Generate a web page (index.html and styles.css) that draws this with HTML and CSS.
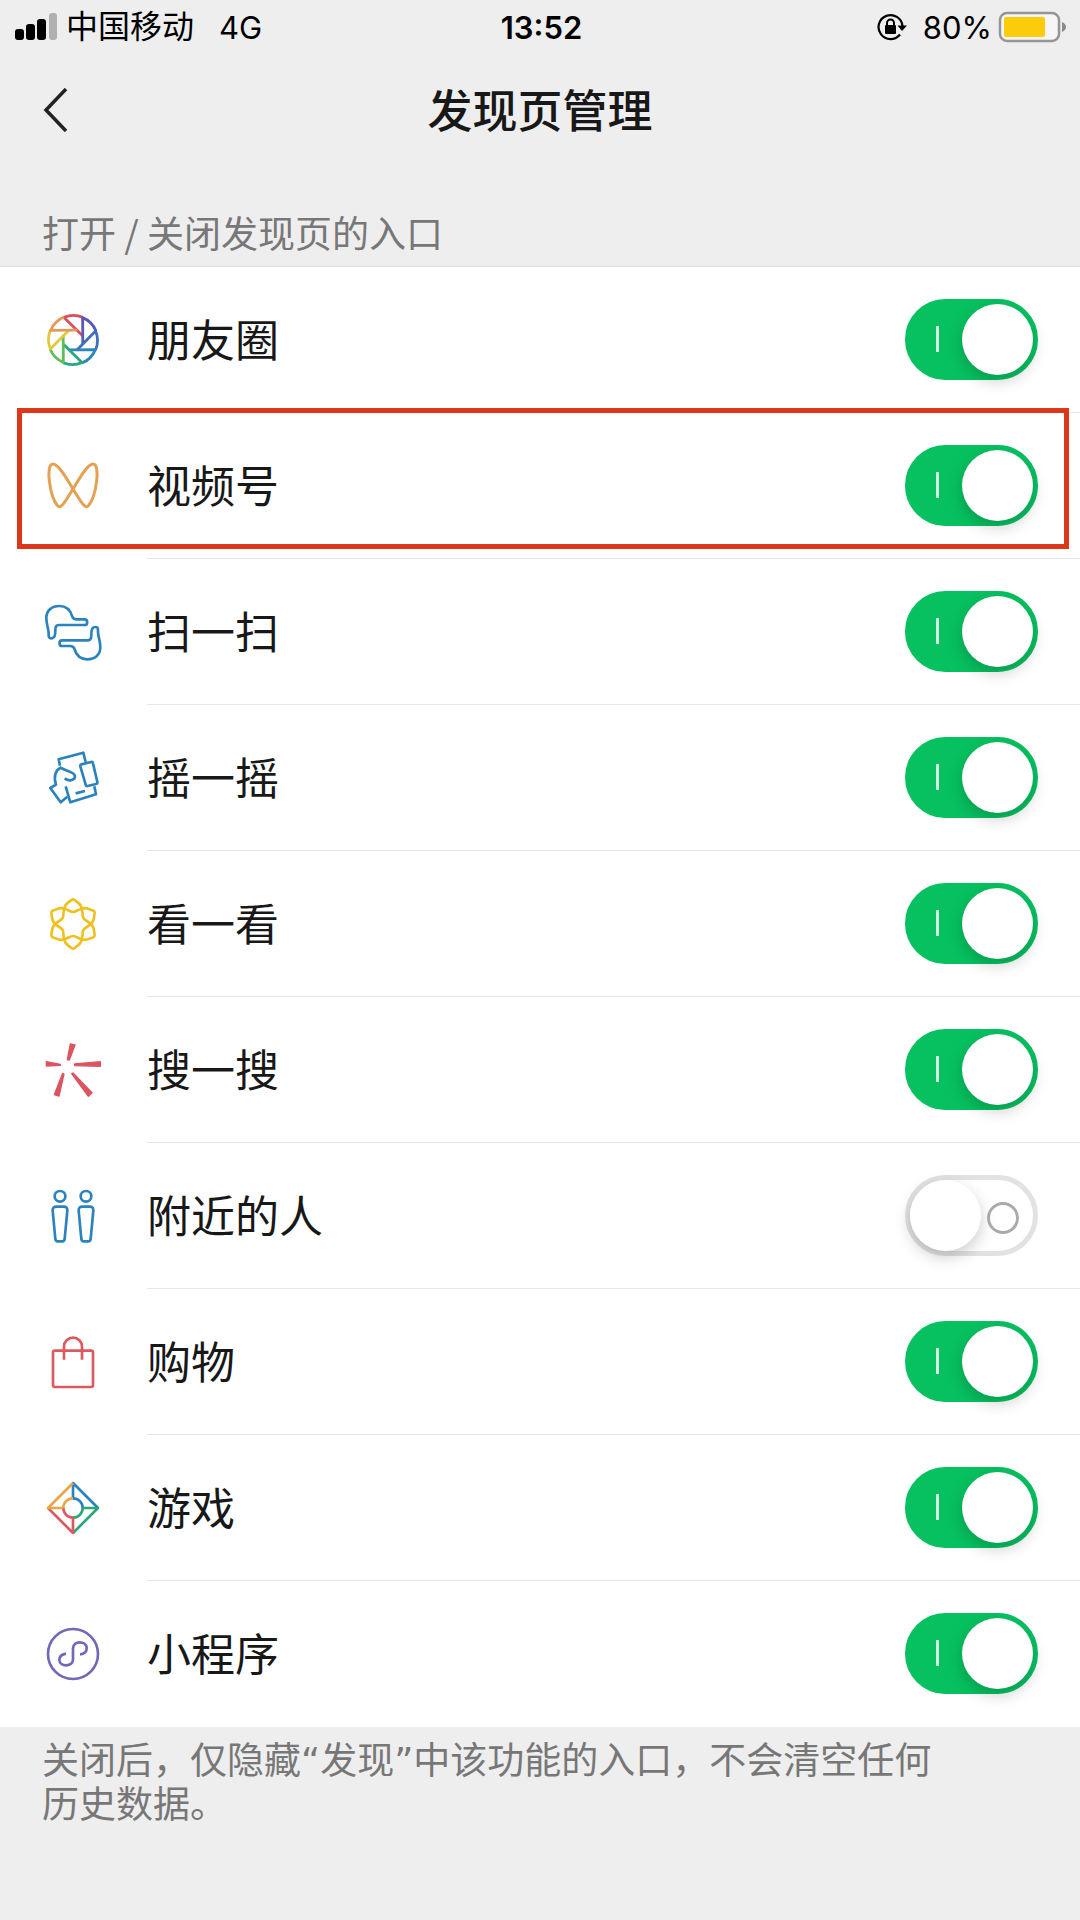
FILE: index.html
```html
<!DOCTYPE html>
<html lang="zh-CN">
<head>
    <meta charset="utf-8">
    <meta name="viewport" content="width=device-width, initial-scale=1">
    <title>发现页管理</title>
    <link rel="stylesheet" href="styles.css">
</head>
<body>
<div class="status-bar">
    <div class="status-left">
        <svg class="signal" viewBox="0 0 44 28" aria-hidden="true">
            <rect x="0" y="16" width="9" height="11" rx="3"/>
            <rect x="11" y="11" width="9" height="16" rx="3"/>
            <rect x="22" y="6" width="9" height="21" rx="3"/>
            <rect x="34" y="0" width="8" height="27" rx="3" fill="#b0b0b0"/>
        </svg>
        <span class="carrier">中国移动</span>
        <span class="network">4G</span>
    </div>
    <div class="status-time">13:52</div>
    <div class="status-right">
        <svg class="lock" viewBox="0 0 30 28" aria-hidden="true">
            <path d="M25.500 13A12 12 0 1 0 23 21.500" fill="none" stroke="#000" stroke-width="2.200"/>
            <path d="M20.500 12.500H30L25 18Z"/>
            <rect x="8" y="12" width="11" height="9" rx="1"/>
            <path d="M10 13V10a3.500 3.500 0 0 1 7 0V13" fill="none" stroke="#000" stroke-width="2"/>
        </svg>
        <span>80%</span>
        <svg class="battery" viewBox="0 0 70 32" aria-hidden="true">
            <rect x="2" y="2" width="59" height="28" rx="7" fill="#f7f5f5" stroke="#959595" stroke-width="2.500"/>
            <rect x="6" y="6" width="41" height="20" rx="2" fill="#fccc0a"/>
            <path d="M64 11Q68 13 68 16T64 21Z" fill="#8a8a8a"/>
        </svg>
    </div>
</div>

<header class="nav">
    <button class="back-btn" aria-label="返回">
        <svg viewBox="0 0 26 44"><path d="M24 1L4 22L24 43" fill="none" stroke="#222" stroke-width="3.500"/></svg>
    </button>
    <h1>发现页管理</h1>
</header>

<main>
    <h2 class="section-label">打开 / 关闭发现页的入口</h2>

    <ul class="list">
        <li class="row">
            <!-- Moments: eight shutter blades -->
            <svg class="icon" viewBox="-30 -30 60 60" stroke-width="2.800">
                <path stroke="#d9505c" d="M9.900 -4L-9 -22.600A24.400 24.400 0 0 1 9.900 -22.600"/>
                <path stroke="#5a58b4" transform="rotate(45)" d="M9.900 -4L-9 -22.600A24.400 24.400 0 0 1 9.900 -22.600"/>
                <path stroke="#3f6dc0" transform="rotate(90)" d="M9.900 -4L-9 -22.600A24.400 24.400 0 0 1 9.900 -22.600"/>
                <path stroke="#2b86ba" transform="rotate(135)" d="M9.900 -4L-9 -22.600A24.400 24.400 0 0 1 9.900 -22.600"/>
                <path stroke="#28a880" transform="rotate(180)" d="M9.900 -4L-9 -22.600A24.400 24.400 0 0 1 9.900 -22.600"/>
                <path stroke="#5cc05a" transform="rotate(225)" d="M9.900 -4L-9 -22.600A24.400 24.400 0 0 1 9.900 -22.600"/>
                <path stroke="#e2c83c" transform="rotate(270)" d="M9.900 -4L-9 -22.600A24.400 24.400 0 0 1 9.900 -22.600"/>
                <path stroke="#e39a58" transform="rotate(315)" d="M9.900 -4L-9 -22.600A24.400 24.400 0 0 1 9.900 -22.600"/>
            </svg>
            <div class="row-body">
                <label for="moments">朋友圈</label>
                <input type="checkbox" role="switch" class="switch" id="moments" checked>
            </div>
        </li>
        <li class="row highlight">
            <!-- Channels -->
            <svg class="icon" viewBox="-30 -30 60 60" stroke="#e3a252" stroke-width="3">
                <path d="M0 3C-5 -5 -14 -22 -20 -22C-28 -22 -23 10 -16 19C-13 24 -9 18 0 3C5 -5 14 -22 20 -22C28 -22 23 10 16 19C13 24 9 18 0 3Z"/>
            </svg>
            <div class="row-body">
                <label for="channels">视频号</label>
                <input type="checkbox" role="switch" class="switch" id="channels" checked>
            </div>
        </li>
        <li class="row">
            <!-- Scan: two framing hands -->
            <svg class="icon" viewBox="39 32 180 180" stroke="#2b82bd" stroke-width="8">
                <path d="M63 141C55 141 56 134 56 126C56 113 49 101 49 80C49 57 66 44 88 44C111 44 122 58 127 76C129 83 133 84 140 84H164C174 84 174 101 164 101H86C78 101 76 106 76 116C76 133 74 141 63 141Z"/>
                <path transform="rotate(180 130 124)" d="M63 141C55 141 56 134 56 126C56 113 49 101 49 80C49 57 66 44 88 44C111 44 122 58 127 76C129 83 133 84 140 84H164C174 84 174 101 164 101H86C78 101 76 106 76 116C76 133 74 141 63 141Z"/>
            </svg>
            <div class="row-body">
                <label for="scan">扫一扫</label>
                <input type="checkbox" role="switch" class="switch" id="scan" checked>
            </div>
        </li>
        <li class="row">
            <!-- Shake: hand with phone -->
            <svg class="icon" viewBox="39 470 180 180" stroke="#2b82bd" stroke-width="8">
                <path d="M90 523L86 504L160 484L167 512M193 585L198 609L121 633L107 585"/>
                <path d="M104 561C122 574 138 563 134 552C130 541 108 540 92 529C76 536 70 556 78 580L61 590L92 633L112 616"/>
                <path d="M154 519L183 512Q188 511 189 516L202 572Q203 577 198 578L173 584Q168 585 167 580L151 525Q150 520 154 519Z"/>
                <path d="M137 606L165 599"/>
            </svg>
            <div class="row-body">
                <label for="shake">摇一摇</label>
                <input type="checkbox" role="switch" class="switch" id="shake" checked>
            </div>
        </li>
        <li class="row">
            <!-- Top stories: six petals -->
            <svg class="icon" viewBox="-90 -90 180 180" stroke="#efc021" stroke-width="8">
                <path d="M-26 -45C-26 -60 -17 -61 -5 -72Q0 -76 5 -72C17 -61 26 -60 26 -45C16 -45 10 -36 0 -36C-10 -36 -16 -45 -26 -45Z"/>
                <path transform="rotate(60)" d="M-26 -45C-26 -60 -17 -61 -5 -72Q0 -76 5 -72C17 -61 26 -60 26 -45C16 -45 10 -36 0 -36C-10 -36 -16 -45 -26 -45Z"/>
                <path transform="rotate(120)" d="M-26 -45C-26 -60 -17 -61 -5 -72Q0 -76 5 -72C17 -61 26 -60 26 -45C16 -45 10 -36 0 -36C-10 -36 -16 -45 -26 -45Z"/>
                <path transform="rotate(180)" d="M-26 -45C-26 -60 -17 -61 -5 -72Q0 -76 5 -72C17 -61 26 -60 26 -45C16 -45 10 -36 0 -36C-10 -36 -16 -45 -26 -45Z"/>
                <path transform="rotate(240)" d="M-26 -45C-26 -60 -17 -61 -5 -72Q0 -76 5 -72C17 -61 26 -60 26 -45C16 -45 10 -36 0 -36C-10 -36 -16 -45 -26 -45Z"/>
                <path transform="rotate(300)" d="M-26 -45C-26 -60 -17 -61 -5 -72Q0 -76 5 -72C17 -61 26 -60 26 -45C16 -45 10 -36 0 -36C-10 -36 -16 -45 -26 -45Z"/>
            </svg>
            <div class="row-body">
                <label for="stories">看一看</label>
                <input type="checkbox" role="switch" class="switch" id="stories" checked>
            </div>
        </li>
        <li class="row">
            <!-- Search: five wedges -->
            <svg class="icon" viewBox="39 478 180 180" stroke="#db5560" stroke-width="4">
                <g fill="#db5560">
                    <path d="M121 490L135 493L118 538L112 537Z"/>
                    <path d="M134 550L211 543V557L134 555Z"/>
                    <path d="M49 543V556L91 554V551Z"/>
                    <path d="M98 578L102 580L87 646L73 642Z"/>
                    <path d="M125 579L129 577L186 636L175 647Z"/>
                </g>
            </svg>
            <div class="row-body">
                <label for="search">搜一搜</label>
                <input type="checkbox" role="switch" class="switch" id="search" checked>
            </div>
        </li>
        <li class="row">
            <!-- People nearby -->
            <svg class="icon" viewBox="39 46 180 180" stroke="#2b82bd" stroke-width="8">
                <circle cx="90" cy="77" r="16"/>
                <path d="M80 108H101Q113 108 112 120L104 205Q103 212 97 212H83Q77 212 76 205L68 120Q67 108 80 108Z"/>
                <circle cx="168" cy="77" r="16"/>
                <path d="M158 108H179Q191 108 190 120L182 205Q181 212 175 212H161Q155 212 154 205L146 120Q145 108 158 108Z"/>
            </svg>
            <div class="row-body">
                <label for="nearby">附近的人</label>
                <input type="checkbox" role="switch" class="switch" id="nearby">
            </div>
        </li>
        <li class="row">
            <!-- Shopping bag -->
            <svg class="icon" viewBox="39 484 180 180" stroke="#db5a60" stroke-width="8">
                <rect x="69" y="540" width="120" height="109" rx="6"/>
                <path d="M102 567V528A27 27 0 0 1 156 528V567"/>
            </svg>
            <div class="row-body">
                <label for="shopping">购物</label>
                <input type="checkbox" role="switch" class="switch" id="shopping" checked>
            </div>
        </li>
        <li class="row">
            <!-- Games: four-colour diamond -->
            <svg class="icon" viewBox="-90 -90 180 180" stroke-width="8">
                <path stroke="#2a80c0" d="M0 -30V-75L75 0M0 -29A29 29 0 0 1 29 0"/>
                <path stroke="#2aa775" transform="rotate(90)" d="M0 -30V-75L75 0M0 -29A29 29 0 0 1 29 0"/>
                <path stroke="#db5a60" transform="rotate(180)" d="M0 -30V-75L75 0M0 -29A29 29 0 0 1 29 0"/>
                <path stroke="#e6a748" transform="rotate(270)" d="M0 -30V-75L75 0M0 -29A29 29 0 0 1 29 0"/>
            </svg>
            <div class="row-body">
                <label for="games">游戏</label>
                <input type="checkbox" role="switch" class="switch" id="games" checked>
            </div>
        </li>
        <li class="row">
            <!-- Mini programs -->
            <svg class="icon" viewBox="39 491 180 180" stroke="#7069b5" stroke-width="8">
                <circle cx="129" cy="581" r="75"/>
                <path d="M150 582C164 581 171 573 170 562C168 541 130 540 129 564V598C128 621 89 620 88 599C88 589 95 582 108 580"/>
            </svg>
            <div class="row-body">
                <label for="mini">小程序</label>
                <input type="checkbox" role="switch" class="switch" id="mini" checked>
            </div>
        </li>
    </ul>

    <p class="note">关闭后，仅隐藏“发现”中该功能的入口，不会清空任何历史数据。</p>
</main>
</body>
</html>
```

FILE: styles.css
```css
* {
    box-sizing: border-box;
}
body {
    margin: 0;
    min-height: 100vh;
    background: #eee;
    color: #181818;
    font-family: Inter, "Noto Sans CJK SC", sans-serif;
}

/* Status bar */
.status-bar {
    display: grid;
    grid-template-columns: 1fr auto 1fr;
    align-items: center;
    height: 54px;
    padding: 0 12px 0 15px;
    color: #000;
    font-size: 31px;
}
.status-left,
.status-right {
    display: flex;
    align-items: center;
}
.status-left {
    gap: 7px;
}
.status-right {
    justify-content: flex-end;
    gap: 6px;
}
.status-time {
    font-weight: 600;
}
.carrier {
    font-size: 32px;
    line-height: 40px;
}
.network {
    margin-left: 18px;
}
.signal {
    width: 44px;
    height: 28px;
}
.lock {
    width: 30px;
    height: 28px;
    margin-right: 10px;
}
.battery {
    width: 70px;
    height: 32px;
}

/* Navigation */
.nav {
    display: grid;
    grid-template-columns: 1fr auto 1fr;
    align-items: center;
    height: 112px;
    padding: 0 42px;
}
.nav h1 {
    margin: 0;
    padding-bottom: 4px;
    font-size: 45px;
    font-weight: 500;
}
.back-btn {
    justify-self: start;
    padding: 0;
    border: none;
    background: none;
    cursor: pointer;
}
.back-btn svg {
    display: block;
    width: 26px;
    height: 44px;
}

/* Section texts */
.section-label,
.note {
    margin: 0;
    color: #777;
    font-size: 37px;
    font-weight: 400;
    line-height: 44px;
}
.section-label {
    padding: 44px 42px 12px;
    border-bottom: 1px solid #ddd;
    font-family: "Noto Sans CJK SC", sans-serif;
}
.note {
    padding: 13px 120px 90px 42px;
    font-family: "DejaVu Sans", "Noto Sans CJK SC", sans-serif;
}

/* List */
.list {
    margin: 0;
    padding: 0;
    list-style: none;
    background: #fff;
}
.row {
    position: relative;
    display: flex;
    align-items: center;
    height: 146px;
    padding-left: 43px;
}
.row-body {
    display: flex;
    flex: 1;
    align-items: center;
    justify-content: space-between;
    height: 100%;
    margin-left: 44px;
    padding-right: 42px;
    border-bottom: 1px solid #e6e6e6;
}
.row:last-child .row-body {
    border-bottom-color: transparent;
}
.row label {
    padding-bottom: 4px;
    font-size: 44px;
}
.icon {
    width: 60px;
    height: 60px;
    fill: none;
    stroke-linejoin: round;
}
.highlight::after {
    content: "";
    position: absolute;
    top: -5px;
    right: 11px;
    bottom: 10px;
    left: 17px;
    border: 5px solid #dc3719;
    pointer-events: none;
}

/* Switch */
.switch {
    position: relative;
    width: 133px;
    height: 81px;
    margin: 0;
    border: 5px solid #e2e2e2;
    border-radius: 41px;
    background: #fff;
    appearance: none;
    cursor: pointer;
}
.switch::before {
    content: "";
    position: absolute;
    top: 0;
    left: 0;
    width: 71px;
    height: 71px;
    border-radius: 50%;
    background: #fff;
    box-shadow: 0 6px 16px rgba(0, 0, 0, 0.2);
}
.switch::after {
    content: "";
    position: absolute;
    top: 22px;
    right: 14px;
    width: 26px;
    height: 26px;
    border: 3px solid #aaa;
    border-radius: 50%;
}
.switch:checked {
    border-color: #07c160;
    background: #07c160;
}
.switch:checked::before {
    right: 0;
    left: auto;
}
.switch:checked::after {
    right: auto;
    left: 26px;
    width: 3px;
    border: none;
    border-radius: 0;
    background: #d4f7e2;
}
```
